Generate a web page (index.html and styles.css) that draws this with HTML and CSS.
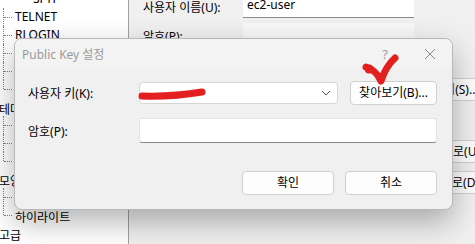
FILE: index.html
```html
<!DOCTYPE HTML>
<html>
	<head>
		<meta http-equiv="Content-Type" content="text/html; charset=UTF-8" />
		<title>Public Key 설정</title>
		<link rel="stylesheet" href="styles.css">
	</head>
	<body>
		<div class="app">
			<div class="tree">
				<div class="group group--deep">
					<div class="node">SFTP</div>
				</div>
				<div class="group">
					<div class="node">TELNET</div>
					<div class="node">RLOGIN</div>
					<div class="node">&nbsp;</div>
					<div class="node">&nbsp;</div>
					<div class="node">&nbsp;</div>
				</div>
				<div class="top">테마</div>
				<div class="group">
					<div class="node">&nbsp;</div>
					<div class="node">&nbsp;</div>
					<div class="node">&nbsp;</div>
				</div>
				<div class="top">모양</div>
				<div class="group">
					<div class="node">&nbsp;</div>
					<div class="node node--ko">하이라이트</div>
				</div>
				<div class="top">고급</div>
			</div>
			<div class="panel">
				<div class="row row--first">
					<span class="row_label">사용자 이름(U):</span>
					<div class="field">ec2-user</div>
				</div>
				<div class="row">
					<span class="row_label">암호(P):</span>
					<div class="field field--off"></div>
				</div>
				<div class="side side--browse"><div class="btn">찾아보기(S)...</div></div>
				<div class="side side--up"><div class="btn">위로(U)</div></div>
				<div class="side side--down"><div class="btn">아래로(D)</div></div>
			</div>
		</div>

		<div class="dialog">
			<div class="dialog_title">
				<span class="dialog_caption">Public Key 설정</span>
				<span class="dialog_help">?</span>
				<svg class="dialog_close" width="12" height="12" viewBox="0 0 12 12">
					<path d="M1 1 L11 11 M11 1 L1 11" stroke="#8a8a8a" stroke-width="1" fill="none"/>
				</svg>
			</div>
			<div class="dialog_body">
				<div class="form">
					<label class="form_label">사용자 키(K):</label>
					<div class="form_field">
						<div class="combo">
							<svg class="combo_arrow" width="10" height="6" viewBox="0 0 10 6">
								<path d="M1 1 L5 5 L9 1" stroke="#555" stroke-width="1" fill="none"/>
							</svg>
						</div>
						<div class="btn btn--browse">찾아보기(B)...</div>
					</div>
					<label class="form_label form_label--pw">암호(P):</label>
					<div class="form_field form_field--pw">
						<div class="input"></div>
					</div>
				</div>
				<div class="actions">
					<div class="btn btn--action">확인</div>
					<div class="btn btn--action">취소</div>
				</div>
			</div>
		</div>

		<!-- red marks drawn over the screenshot -->
		<svg class="marks" width="475" height="244" viewBox="0 0 475 244">
			<path d="M142 96 Q172 97 202 92" stroke="#e41f1f" stroke-width="7" stroke-linecap="round" fill="none"/>
			<path d="M366 67 Q376 70 381 81 Q386 66 395 58" stroke="#e41f1f" stroke-width="7" stroke-linecap="round" stroke-linejoin="round" fill="none"/>
			<circle cx="369" cy="69" r="4.5" fill="#e41f1f"/>
		</svg>
	</body>
</html>
```

FILE: styles.css
```css
body {
	margin: 0;
	font-family: "Noto Sans", "Noto Sans CJK KR", sans-serif;
	font-size: 12px;
	color: #000;
	background: #f0f0f0;
}
.app {
	display: flex;
	width: 475px;
	height: 244px;
	overflow: hidden;
}

/* left tree */
.tree {
	flex: none;
	width: 128px;
	border-right: 1px solid #a0a0a0;
	background: #fff;
	margin-top: -10px;
	height: 254px;
}
.top {
	height: 18px;
	line-height: 18px;
	padding-top: 3px;
	box-sizing: border-box;
	margin-left: -1px;
}
.group {
	padding-left: 4px;
}
.group--deep {
	padding-left: 22px;
}
.node {
	position: relative;
	height: 18px;
	line-height: 18px;
	padding-left: 11px;
	box-sizing: border-box;
}
.node--ko {
	padding-top: 3px;
}
.node::before {
	content: "";
	position: absolute;
	left: -1px;
	top: 0;
	bottom: 0;
	border-left: 1px dotted #808080;
}
.node:last-child::before {
	bottom: 9px;
}
.node::after {
	content: "";
	position: absolute;
	left: 0;
	width: 8px;
	top: 9px;
	border-top: 1px dotted #808080;
}

/* right panel */
.panel {
	flex: none;
	width: 332px;
	padding-left: 14px;
	display: flex;
	flex-direction: column;
	align-items: flex-start;
}
.row {
	display: flex;
	align-items: center;
	height: 24px;
	margin-top: 5px;
}
.row--first {
	margin-top: -6px;
}
.row_label {
	width: 100px;
	padding-top: 2px;
}
.field {
	width: 167px;
	height: 23px;
	line-height: 22px;
	padding-left: 4px;
	background: #fff;
	border-bottom: 1px solid #8a8a8a;
}
.field--off {
	background: #f7f7f7;
	border-bottom-color: #e0e0e0;
}
.side {
	display: flex;
	white-space: nowrap;
}
.side--browse {
	margin-top: 31px;
	margin-left: 259px;
}
.side--up {
	margin-top: 39px;
	margin-left: 290px;
}
.side--down {
	margin-top: 8px;
	margin-left: 278px;
}
.side .btn {
	height: 23px;
	line-height: 21px;
	padding: 0 8px;
}

.btn {
	background: #fdfdfd;
	border: 1px solid #d0d0d0;
	border-radius: 4px;
	text-align: center;
	box-sizing: border-box;
}

/* dialog */
.dialog {
	position: absolute;
	left: 14px;
	top: 38px;
	width: 439px;
	height: 172px;
	box-sizing: border-box;
	border: 1px solid #b8b8b8;
	border-radius: 8px;
	background: #f0f0f0;
	box-shadow: 0 12px 30px rgba(0, 0, 0, 0.3);
	overflow: hidden;
}
.dialog_title {
	height: 30px;
	background: #f3f3f3;
	display: flex;
	align-items: center;
	padding-left: 7px;
}
.dialog_caption {
	flex: 1;
	color: #9a9a9a;
}
.dialog_help {
	color: #9a9a9a;
	font-size: 13px;
	margin-right: 36px;
}
.dialog_close {
	margin-right: 16px;
}
.dialog_body {
	padding: 12px 15px 0 12px;
}
.form {
	display: grid;
	grid-template-columns: 112px 1fr;
	row-gap: 13px;
	align-items: center;
}
.form_label {
	padding-left: 1px;
}
.form_field {
	display: flex;
	align-items: center;
	gap: 12px;
}
.combo {
	flex: 1;
	height: 22px;
	box-sizing: border-box;
	background: #fff;
	border: 1px solid #d6d6d6;
	border-radius: 4px;
	display: flex;
	align-items: center;
	justify-content: flex-end;
	padding-right: 6px;
}
.btn--browse {
	width: 87px;
	height: 24px;
	line-height: 22px;
}
.input {
	flex: 1;
	height: 25px;
	box-sizing: border-box;
	background: #fff;
	border: 1px solid #e4e4e4;
	border-bottom-color: #8a8a8a;
	border-radius: 3px;
}
.actions {
	display: flex;
	justify-content: flex-end;
	gap: 11px;
	margin-top: 28px;
}
.btn--action {
	width: 92px;
	height: 24px;
	line-height: 22px;
}

.marks {
	position: absolute;
	left: 0;
	top: 0;
}
```
